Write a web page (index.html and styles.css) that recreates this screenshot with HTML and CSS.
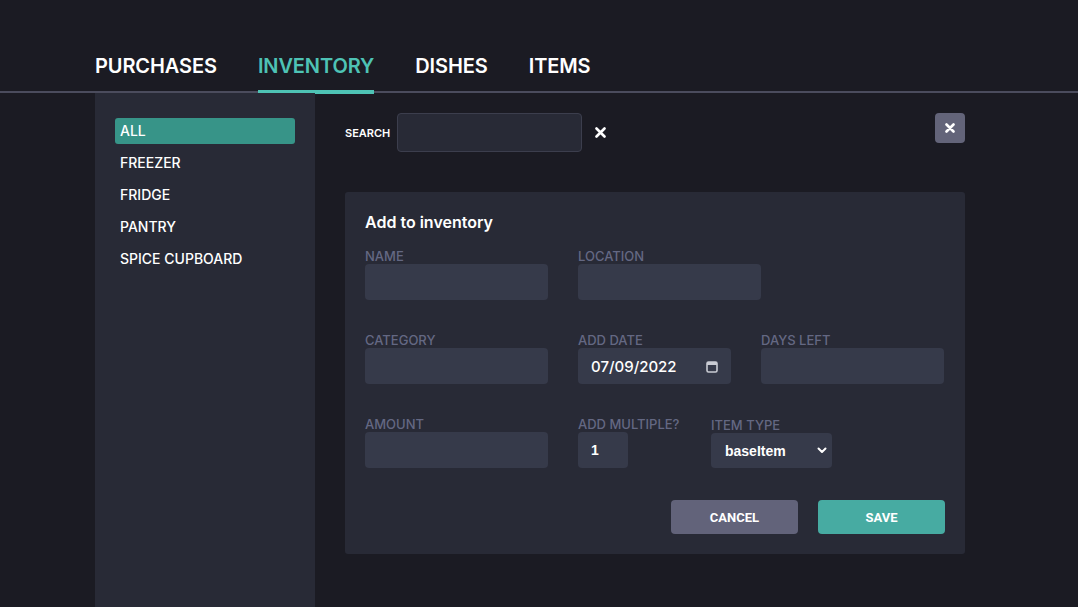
FILE: index.html
```html
<!DOCTYPE html>
<html lang="en">
<head>
<meta charset="utf-8">
<title>Inventory</title>
<link rel="stylesheet" href="styles.css">
</head>
<body>
<nav class="tabs">
  <a class="tab">PURCHASES</a>
  <a class="tab active">INVENTORY</a>
  <a class="tab">DISHES</a>
  <a class="tab">ITEMS</a>
</nav>
<div class="layout">
  <aside class="sidebar">
    <div class="loc active">ALL</div>
    <div class="loc">FREEZER</div>
    <div class="loc">FRIDGE</div>
    <div class="loc">PANTRY</div>
    <div class="loc">SPICE CUPBOARD</div>
  </aside>
  <main class="main">
    <div class="toolbar">
      <label class="search-label">SEARCH</label>
      <input class="search-input" type="text">
      <span class="clear-icon">
        <svg width="11" height="11" viewBox="0 0 11 11"><path d="M1.5 1.5 L9.5 9.5 M9.5 1.5 L1.5 9.5" stroke="#fff" stroke-width="2.6" stroke-linecap="round"/></svg>
      </span>
      <button class="close-btn">
        <svg width="10" height="10" viewBox="0 0 10 10"><path d="M1.5 1.5 L8.5 8.5 M8.5 1.5 L1.5 8.5" stroke="#fff" stroke-width="2.6" stroke-linecap="round"/></svg>
      </button>
    </div>
    <section class="card">
      <h2 class="card-title">Add to inventory</h2>
      <div class="row">
        <div class="field w-main"><label>NAME</label><input class="inp" type="text"></div>
        <div class="field"><label>LOCATION</label><input class="inp" type="text"></div>
      </div>
      <div class="row">
        <div class="field w-main"><label>CATEGORY</label><input class="inp" type="text"></div>
        <div class="field w-col2">
          <label>ADD DATE</label>
          <div class="inp date">
            <span>07/09/2022</span>
            <svg width="12" height="13" viewBox="0 0 12 13"><rect x="1" y="2" width="10" height="10" rx="1.5" fill="none" stroke="#c9cbd3" stroke-width="1.6"/><rect x="1" y="2" width="10" height="3" fill="#c9cbd3"/></svg>
          </div>
        </div>
        <div class="field"><label>DAYS LEFT</label><input class="inp" type="text"></div>
      </div>
      <div class="row">
        <div class="field w-main"><label>AMOUNT</label><input class="inp" type="text"></div>
        <div class="field mult"><label>ADD MULTIPLE?</label><input class="inp small" type="text" value="1"></div>
        <div class="field type">
          <label>ITEM TYPE</label>
          <div class="select-wrap">
            <select class="sel"><option>baseItem</option></select>
            <svg class="chev" width="10" height="7" viewBox="0 0 10 7"><path d="M1.5 1.5 L5 5 L8.5 1.5" fill="none" stroke="#fff" stroke-width="2" stroke-linecap="round" stroke-linejoin="round"/></svg>
          </div>
        </div>
      </div>
      <div class="actions">
        <button class="btn cancel">CANCEL</button>
        <button class="btn save">SAVE</button>
      </div>
    </section>
  </main>
</div>
</body>
</html>
```
FILE: styles.css
```css
* { box-sizing: border-box; }
html, body { margin: 0; padding: 0; }
body {
  background: #1b1b23;
  color: #fff;
  font-family: Inter, "Noto Sans", sans-serif;
  height: 100vh;
  overflow: hidden;
  display: flex;
  flex-direction: column;
}
.tabs {
  display: flex;
  gap: 41px;
  padding: 54px 0 0 95px;
  border-bottom: 2px solid #4b4c5d;
}
.tab {
  font-size: 20px;
  line-height: 24px;
  font-weight: 600;
  color: #fff;
  padding-bottom: 12px;
  border-bottom: 4px solid transparent;
  margin-bottom: -3px;
  letter-spacing: -0.1px;
}
.tab.active {
  color: #4ec3b5;
  border-bottom-color: #4ec3b5;
}
.layout {
  display: flex;
  flex: 1;
}
.sidebar {
  width: 220px;
  margin-left: 95px;
  background: #282a36;
  padding: 25px 20px;
}
.loc {
  height: 26px;
  line-height: 26px;
  padding-left: 5px;
  margin-bottom: 6px;
  font-size: 14px;
  font-weight: 500;
  border-radius: 3px;
}
.loc.active { background: #379488; }
.main {
  width: 620px;
  margin-left: 30px;
  padding-top: 20px;
}
.toolbar {
  display: flex;
  align-items: center;
  height: 39px;
}
.search-label {
  font-size: 11px;
  font-weight: 600;
  margin-right: 7px;
  margin-top: 1px;
}
.search-input {
  width: 185px;
  height: 39px;
  background: #282a36;
  border: 1px solid #3c3e4d;
  border-radius: 4px;
  color: #fff;
}
.clear-icon {
  display: flex;
  margin-left: 13px;
}
.close-btn {
  margin-left: auto;
  align-self: flex-start;
  width: 30px;
  height: 30px;
  border: 0;
  border-radius: 4px;
  background: #636479;
  display: flex;
  align-items: center;
  justify-content: center;
  padding: 0;
}
.card {
  margin-top: 40px;
  background: #282a36;
  border-radius: 3px;
  padding: 20px;
}
.card-title {
  margin: 0 0 16px;
  font-size: 16px;
  line-height: 20px;
  font-weight: 600;
}
.row {
  display: flex;
  margin-bottom: 32px;
}
.field label {
  display: block;
  font-size: 13px;
  line-height: 16px;
  font-weight: 500;
  color: #646883;
  white-space: nowrap;
}
.w-main { width: 183px; margin-right: 30px; }
.w-col2 { width: 183px; }
.inp {
  display: block;
  width: 183px;
  height: 36px;
  background: #363a4a;
  border: 0;
  border-radius: 4px;
  color: #fff;
  padding: 0 13px;
  font-family: "Liberation Sans", Arial, sans-serif;
  font-size: 14px;
  font-weight: 700;
  outline: none;
}
.date {
  width: 153px;
  display: flex;
  align-items: center;
  justify-content: space-between;
  padding: 0 13px;
  font-family: Inter, sans-serif;
  font-size: 15px;
  font-weight: 500;
}
.mult { width: 103px; margin-right: 30px; }
.small { width: 50px; }
.type { margin-top: 1px; }
.select-wrap {
  position: relative;
  width: 121px;
}
.sel {
  appearance: none;
  -webkit-appearance: none;
  width: 121px;
  height: 35px;
  background: #363a4a;
  border: 0;
  border-radius: 4px;
  color: #fff;
  padding: 0 14px;
  font-family: "Liberation Sans", Arial, sans-serif;
  font-size: 14px;
  font-weight: 700;
}
.chev {
  position: absolute;
  right: 5px;
  top: 14px;
}
.actions {
  display: flex;
  justify-content: flex-end;
  gap: 20px;
  margin-top: 31px;
}
.row:last-of-type { margin-bottom: 0; }
.btn {
  width: 127px;
  height: 34px;
  border: 0;
  border-radius: 4px;
  color: #fff;
  font-family: Roboto, "Liberation Sans", sans-serif;
  font-weight: 700;
  font-size: 13px;
}
.cancel { background: #62637a; }
.save { background: #47aba2; }
```
